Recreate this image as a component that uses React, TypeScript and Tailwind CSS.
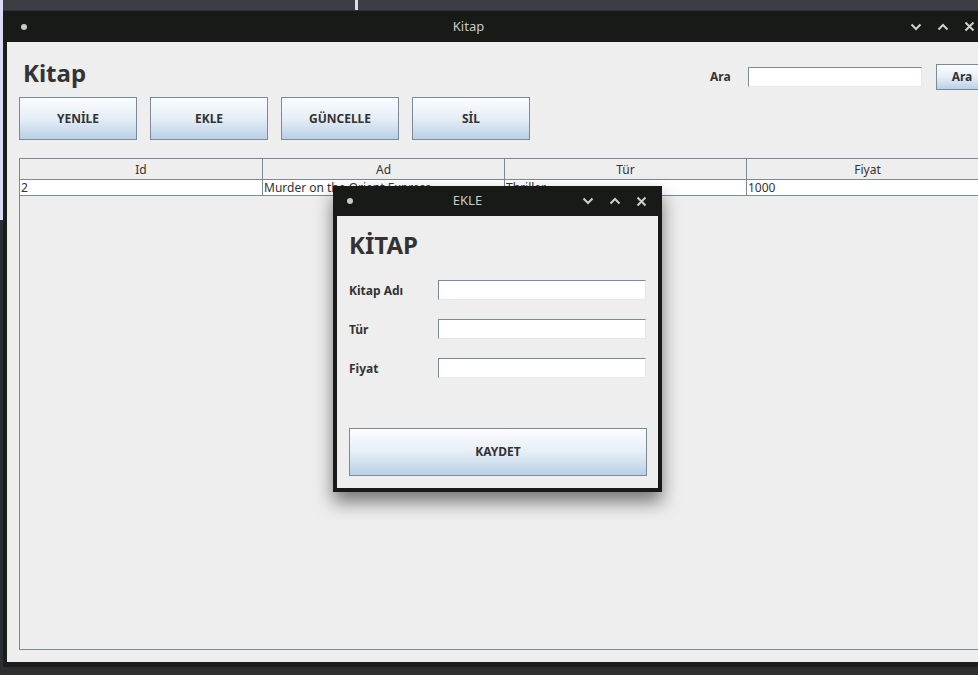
const font = { fontFamily: '"Noto Sans", "Open Sans", sans-serif' };

const Chevron = ({ up }: { up?: boolean }) => (
  <svg width="12" height="8" viewBox="0 0 12 8" className="block">
    <path
      d={up ? 'M1.5 6.5 L6 2 L10.5 6.5' : 'M1.5 1.5 L6 6 L10.5 1.5'}
      fill="none"
      stroke="#cfd0ce"
      strokeWidth="2"
    />
  </svg>
);

const Close = () => (
  <svg width="11" height="11" viewBox="0 0 11 11" className="block">
    <path d="M1.5 1.5 L9.5 9.5 M9.5 1.5 L1.5 9.5" fill="none" stroke="#cfd0ce" strokeWidth="2" />
  </svg>
);

const TitleBar = ({ title, compact }: { title: string; compact?: boolean }) => (
  <div className="relative flex items-center h-full bg-[#181a17] text-[13px] text-[#c9c9c7]">
    <div className={compact ? 'ml-[14px] w-[6px] h-[6px] rounded-full bg-[#c9c9c7]' : 'ml-[18px] w-[6px] h-[6px] rounded-full bg-[#c9c9c7]'} />
    <div className="flex-1 text-center">{title}</div>
    <div className="flex items-center gap-[15px] mr-[15px]">
      <Chevron />
      <Chevron up />
      <Close />
    </div>
  </div>
);

const SwingButton = ({ label, className }: { label: string; className: string }) => (
  <div
    className={`flex items-center justify-center border border-[#7a8a99] bg-gradient-to-b from-[#fbfcfe] via-[#e6eef7] to-[#b9d0e6] text-[12px] font-bold text-[#333333] ${className}`}
  >
    {label}
  </div>
);

const TextInput = ({ className }: { className: string }) => (
  <div className={`bg-white border border-[#7a8a99] border-r-[#e8e8e8] border-b-[#e8e8e8] ${className}`} />
);

const columns = ['Id', 'Ad', 'Tür', 'Fiyat'];
const row = ['2', 'Murder on the Orient Express', 'Thriller', '1000'];

const MainWindow = () => (
  <div className="absolute left-[3px] top-[11px] w-[987px] h-[656px] flex flex-col bg-[#1c1e1c]">
    <div className="h-[31px]">
      <TitleBar title="Kitap" />
    </div>
    <div className="ml-[4px] h-[620px] bg-[#eeeeee] flex flex-col">
      <div className="flex h-[55px] pl-[16px]">
        <div className="w-[687px] mt-[15px] text-[24px] leading-[32px] font-bold text-[#333333]">Kitap</div>
        <div className="flex items-center h-[26px] mt-[22px]">
          <div className="w-[38px] text-[12px] font-bold text-[#333333]">Ara</div>
          <TextInput className="w-[174px] h-[20px]" />
          <SwingButton label="Ara" className="ml-[14px] w-[52px] h-[26px] shrink-0" />
        </div>
      </div>
      <div className="flex gap-[13px] pl-[12px]">
        {['YENİLE', 'EKLE', 'GÜNCELLE', 'SİL'].map((b) => (
          <SwingButton key={b} label={b} className="w-[118px] h-[43px]" />
        ))}
      </div>
      <div className="mt-[18px] ml-[12px] h-[492px] border border-[#7a8a99] text-[12px] text-[#333333] overflow-hidden">
        <div className="flex h-[21px] border-b border-[#7a8a99]">
          {columns.map((c, i) => (
            <div
              key={c}
              className={`w-[242px] shrink-0 flex items-center justify-center pt-[1px] ${i > 0 ? 'border-l border-[#7a8a99]' : ''}`}
            >
              {c}
            </div>
          ))}
        </div>
        <div className="flex h-[16px] bg-white border-b border-[#7a8a99]">
          {row.map((c, i) => (
            <div
              key={c}
              className={`w-[242px] shrink-0 pl-[1px] leading-[15px] whitespace-nowrap overflow-hidden ${i > 0 ? 'border-l border-[#7a8a99]' : ''}`}
            >
              {c}
            </div>
          ))}
        </div>
      </div>
    </div>
  </div>
);

const Dialog = () => (
  <div className="absolute left-[333px] top-[186px] w-[329px] h-[306px] flex flex-col bg-[#181a17] rounded-t-[4px] shadow-[0_10px_18px_rgba(0,0,0,0.5)]">
    <div className="h-[30px]">
      <TitleBar title="EKLE" compact />
    </div>
    <div className="mx-[4px] h-[272px] bg-[#eeeeee] pl-[12px] flex flex-col">
      <div className="mt-[13px] text-[24px] leading-[32px] font-bold text-[#333333]">KİTAP</div>
      <div className="mt-[19px] flex flex-col gap-[19px]">
        {['Kitap Adı', 'Tür', 'Fiyat'].map((l) => (
          <div key={l} className="flex items-center h-[20px]">
            <div className="w-[89px] text-[12px] font-bold text-[#333333] pt-[1px]">{l}</div>
            <TextInput className="w-[208px] h-[20px]" />
          </div>
        ))}
      </div>
      <SwingButton label="KAYDET" className="mt-[50px] w-[298px] h-[48px]" />
    </div>
  </div>
);

export default function App() {
  return (
    <div className="relative w-[978px] h-[675px] overflow-hidden bg-[#2c2f31]" style={font}>
      <div className="h-[11px] bg-[#3b3f44] border-b border-[#2e3134]" />
      <div className="absolute left-0 top-0 w-[3px] h-[220px] bg-[#dcdaf5]" />
      <div className="absolute left-[355px] top-0 w-[3px] h-[10px] bg-[#dcdaf5]" />
      <MainWindow />
      <Dialog />
    </div>
  );
}
